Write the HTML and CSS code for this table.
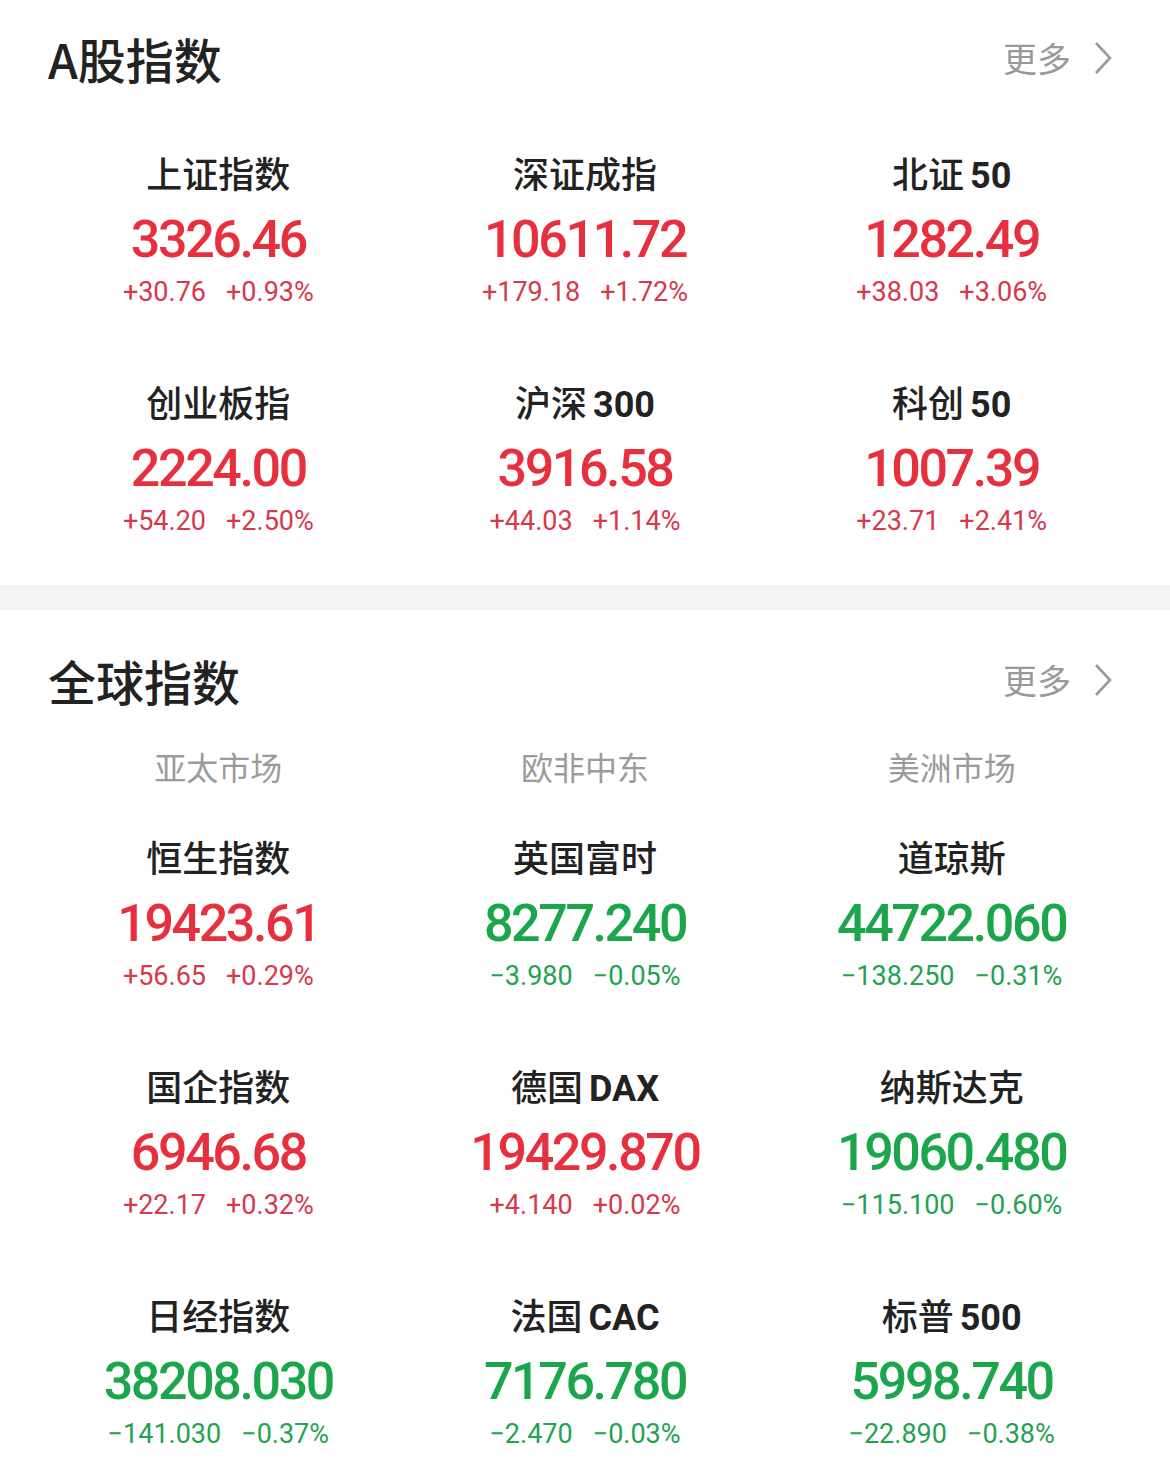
FILE: index.html
```html
<!DOCTYPE html>
<html lang="zh-CN">
<head>
<meta charset="utf-8">
<title>指数</title>
<link rel="stylesheet" href="styles.css">
</head>
<body>
<section class="section first">
  <div class="header">
    <h2 class="title">A股指数</h2>
    <div class="more">更多<svg class="chev" width="20" height="34" viewBox="0 0 20 34"><polyline points="3,2 17,17 3,32" fill="none" stroke="#9a9a9a" stroke-width="2.6"/></svg></div>
  </div>
  <div class="grid">
    <div class="cell up"><div class="name">上证指数</div><div class="value">3326.46</div><div class="chg"><span>+30.76</span><span>+0.93%</span></div></div>
    <div class="cell up"><div class="name">深证成指</div><div class="value">10611.72</div><div class="chg"><span>+179.18</span><span>+1.72%</span></div></div>
    <div class="cell up"><div class="name">北证<span class="num">50</span></div><div class="value">1282.49</div><div class="chg"><span>+38.03</span><span>+3.06%</span></div></div>
    <div class="cell up"><div class="name">创业板指</div><div class="value">2224.00</div><div class="chg"><span>+54.20</span><span>+2.50%</span></div></div>
    <div class="cell up"><div class="name">沪深<span class="num">300</span></div><div class="value">3916.58</div><div class="chg"><span>+44.03</span><span>+1.14%</span></div></div>
    <div class="cell up"><div class="name">科创<span class="num">50</span></div><div class="value">1007.39</div><div class="chg"><span>+23.71</span><span>+2.41%</span></div></div>
  </div>
</section>
<div class="divider"></div>
<section class="section second">
  <div class="header">
    <h2 class="title">全球指数</h2>
    <div class="more">更多<svg class="chev" width="20" height="34" viewBox="0 0 20 34"><polyline points="3,2 17,17 3,32" fill="none" stroke="#9a9a9a" stroke-width="2.6"/></svg></div>
  </div>
  <div class="tabs">
    <div class="tab">亚太市场</div>
    <div class="tab">欧非中东</div>
    <div class="tab">美洲市场</div>
  </div>
  <div class="grid">
    <div class="cell up"><div class="name">恒生指数</div><div class="value">19423.61</div><div class="chg"><span>+56.65</span><span>+0.29%</span></div></div>
    <div class="cell down"><div class="name">英国富时</div><div class="value">8277.240</div><div class="chg"><span>−3.980</span><span>−0.05%</span></div></div>
    <div class="cell down"><div class="name">道琼斯</div><div class="value">44722.060</div><div class="chg"><span>−138.250</span><span>−0.31%</span></div></div>
    <div class="cell up"><div class="name">国企指数</div><div class="value">6946.68</div><div class="chg"><span>+22.17</span><span>+0.32%</span></div></div>
    <div class="cell up"><div class="name">德国<span class="num">DAX</span></div><div class="value">19429.870</div><div class="chg"><span>+4.140</span><span>+0.02%</span></div></div>
    <div class="cell down"><div class="name">纳斯达克</div><div class="value">19060.480</div><div class="chg"><span>−115.100</span><span>−0.60%</span></div></div>
    <div class="cell down"><div class="name">日经指数</div><div class="value">38208.030</div><div class="chg"><span>−141.030</span><span>−0.37%</span></div></div>
    <div class="cell down"><div class="name">法国<span class="num">CAC</span></div><div class="value">7176.780</div><div class="chg"><span>−2.470</span><span>−0.03%</span></div></div>
    <div class="cell down"><div class="name">标普<span class="num">500</span></div><div class="value">5998.740</div><div class="chg"><span>−22.890</span><span>−0.38%</span></div></div>
  </div>
</section>
</body>
</html>
```
FILE: styles.css
```css
html, body {
  margin: 0;
  padding: 0;
  background: #ffffff;
}
body {
  width: 1170px;
  font-family: "Noto Sans CJK SC", "Noto Sans", sans-serif;
  color: #222222;
}
.section {
  padding: 0 35px;
}
.section.first {
  padding-bottom: 42px;
}
.section.second {
  padding-top: 12px;
}
.header {
  height: 116px;
  display: flex;
  align-items: center;
  justify-content: space-between;
  padding: 0 22px 0 13px;
}
.title {
  margin: 0;
  font-size: 48px;
  font-weight: 500;
  color: #222222;
  line-height: 60px;
  height: 60px;
}
.more {
  display: flex;
  align-items: center;
  gap: 22px;
  font-size: 34px;
  color: #999999;
  line-height: 44px;
  height: 44px;
}
.chev {
  display: block;
}
.divider {
  height: 25px;
  background: #f4f4f4;
}
.tabs {
  display: grid;
  grid-template-columns: repeat(3, 1fr);
  margin-top: 10px;
}
.tab {
  text-align: center;
  font-size: 32px;
  line-height: 36px;
  height: 40px;
  color: #9b9b9b;
}
.grid {
  display: grid;
  grid-template-columns: repeat(3, 1fr);
  row-gap: 55px;
  padding-top: 24px;
}
.second .grid {
  padding-top: 36px;
}
.cell {
  display: flex;
  flex-direction: column;
  align-items: center;
}
.name {
  height: 70px;
  font-size: 36px;
  line-height: 64px;
  font-weight: 500;
  color: #222222;
  white-space: nowrap;
}
.name .num {
  font-family: Roboto, "Noto Sans", sans-serif;
  font-weight: 700;
  margin-left: 6px;
}
.value {
  height: 60px;
  font-family: Roboto, "Noto Sans", sans-serif;
  font-size: 52px;
  font-weight: 500;
  line-height: 60px;
  letter-spacing: -2.4px;
}
.chg {
  display: flex;
  gap: 20px;
  height: 44px;
  font-family: Roboto, "Noto Sans", sans-serif;
  font-size: 27px;
  line-height: 44px;
}
.up .value { color: #e6303e; }
.up .chg { color: #d8384b; }
.down .value { color: #1ba64b; }
.down .chg { color: #23a252; }
```
